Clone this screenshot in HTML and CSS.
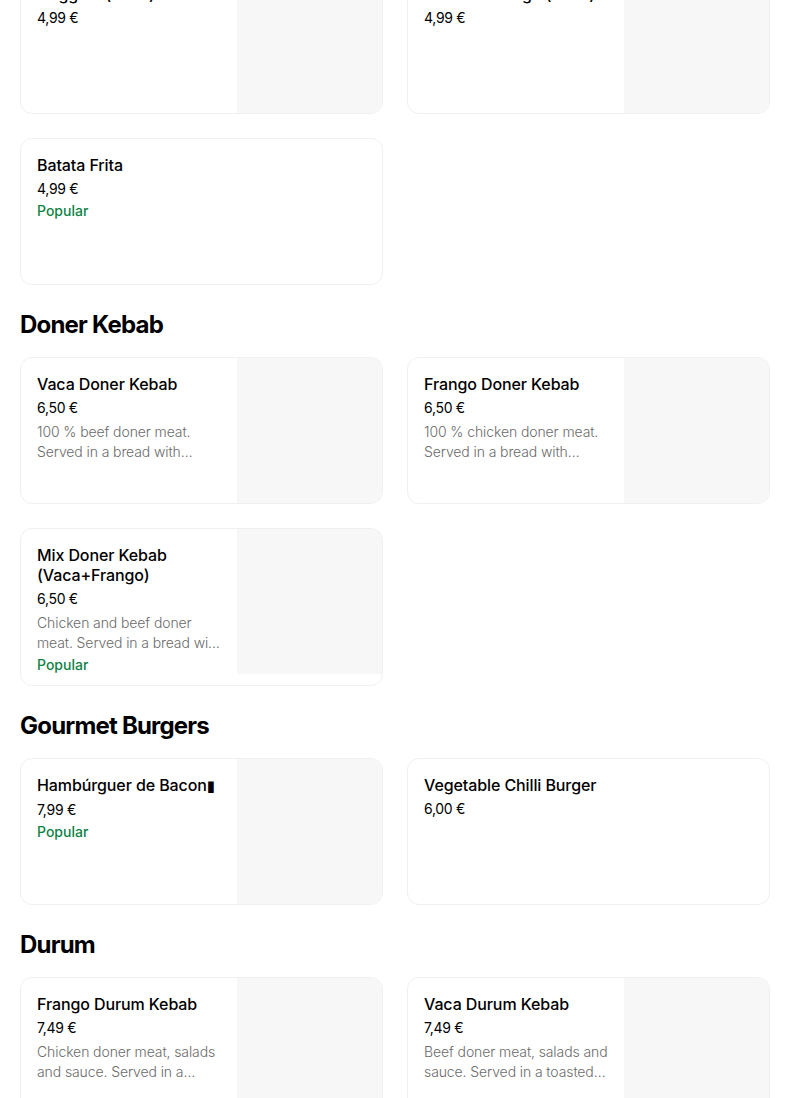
FILE: index.html
```html
<!DOCTYPE html>
<html lang="pt">
<head>
<meta charset="utf-8">
<title>Menu</title>
<link rel="stylesheet" href="styles.css">
</head>
<body>
<main class="menu">
  <section class="section">
    <div class="grid">
      <div class="card">
        <div class="info">
          <div class="title">Nuggets (6 un.)</div>
          <div class="price">4,99 €</div>
        </div>
        <div class="thumb"></div>
      </div>
      <div class="card">
        <div class="info">
          <div class="title">Asas de Frango (6 un.)</div>
          <div class="price">4,99 €</div>
        </div>
        <div class="thumb"></div>
      </div>
      <div class="card">
        <div class="info">
          <div class="title">Batata Frita</div>
          <div class="price">4,99 €</div>
          <div class="popular">Popular</div>
        </div>
      </div>
    </div>
  </section>

  <section class="section">
    <h2 class="heading">Doner Kebab</h2>
    <div class="grid">
      <div class="card">
        <div class="info">
          <div class="title">Vaca Doner Kebab</div>
          <div class="price">6,50 €</div>
          <div class="desc">100 % beef doner meat. Served in a bread with salads and sauce of your choice.</div>
        </div>
        <div class="thumb"></div>
      </div>
      <div class="card">
        <div class="info">
          <div class="title">Frango Doner Kebab</div>
          <div class="price">6,50 €</div>
          <div class="desc">100 % chicken doner meat. Served in a bread with salads and sauce of your choice.</div>
        </div>
        <div class="thumb"></div>
      </div>
      <div class="card">
        <div class="info">
          <div class="title">Mix Doner Kebab (Vaca+Frango)</div>
          <div class="price">6,50 €</div>
          <div class="desc">Chicken and beef doner meat. Served in a bread with salads and sauce.</div>
          <div class="popular">Popular</div>
        </div>
        <div class="thumb"></div>
      </div>
    </div>
  </section>

  <section class="section">
    <h2 class="heading">Gourmet Burgers</h2>
    <div class="grid">
      <div class="card">
        <div class="info">
          <div class="title">Hambúrguer de Bacon<span class="tofu">▮</span></div>
          <div class="price">7,99 €</div>
          <div class="popular">Popular</div>
        </div>
        <div class="thumb"></div>
      </div>
      <div class="card">
        <div class="info">
          <div class="title">Vegetable Chilli Burger</div>
          <div class="price">6,00 €</div>
        </div>
      </div>
    </div>
  </section>

  <section class="section">
    <h2 class="heading">Durum</h2>
    <div class="grid">
      <div class="card">
        <div class="info">
          <div class="title">Frango Durum Kebab</div>
          <div class="price">7,49 €</div>
          <div class="desc">Chicken doner meat, salads and sauce. Served in a toasted wrap.</div>
        </div>
        <div class="thumb"></div>
      </div>
      <div class="card">
        <div class="info">
          <div class="title">Vaca Durum Kebab</div>
          <div class="price">7,49 €</div>
          <div class="desc">Beef doner meat, salads and sauce. Served in a toasted wrap.</div>
        </div>
        <div class="thumb"></div>
      </div>
    </div>
  </section>
</main>
</body>
</html>
```

FILE: styles.css
```css
* { box-sizing: border-box; }

html, body {
  margin: 0;
  padding: 0;
  background: #ffffff;
}

body {
  font-family: Inter, "Liberation Sans", sans-serif;
  color: #000000;
  overflow: hidden;
}

.menu {
  width: 750px;
  margin: -33px 0 0 20px;
}

.section + .section {
  margin-top: 24px;
}

.heading {
  margin: 0 0 16px 0;
  font-size: 24px;
  line-height: 32px;
  font-weight: 700;
  letter-spacing: -0.8px;
}

.grid {
  display: grid;
  grid-template-columns: 363px 363px;
  column-gap: 24px;
  row-gap: 24px;
  align-items: start;
}

.card {
  display: flex;
  min-height: 147px;
  border: 1px solid #f0f0f0;
  border-radius: 12px;
  overflow: hidden;
  background: #ffffff;
}

.info {
  flex: 1;
  min-width: 0;
  padding: 16px 16px 10px 16px;
  display: flex;
  flex-direction: column;
}

.title {
  font-size: 16px;
  line-height: 20px;
  font-weight: 500;
  letter-spacing: -0.1px;
}

.tofu {
  font-family: "DejaVu Sans", sans-serif;
  font-size: 15px;
}

.price {
  margin-top: 4px;
  font-size: 14px;
  line-height: 20px;
  font-weight: 400;
  letter-spacing: -0.3px;
}

.desc {
  margin-top: 4px;
  height: 40px;
  font-size: 14px;
  line-height: 20px;
  font-weight: 300;
  color: #6b6b6b;
  letter-spacing: -0.1px;
  display: -webkit-box;
  -webkit-line-clamp: 2;
  -webkit-box-orient: vertical;
  overflow: hidden;
}

.popular {
  margin-top: 2px;
  font-size: 14px;
  line-height: 20px;
  font-weight: 500;
  color: #0e8345;
}

.thumb {
  flex: 0 0 145px;
  width: 145px;
  height: 145px;
  background: #f7f7f7;
}
```
